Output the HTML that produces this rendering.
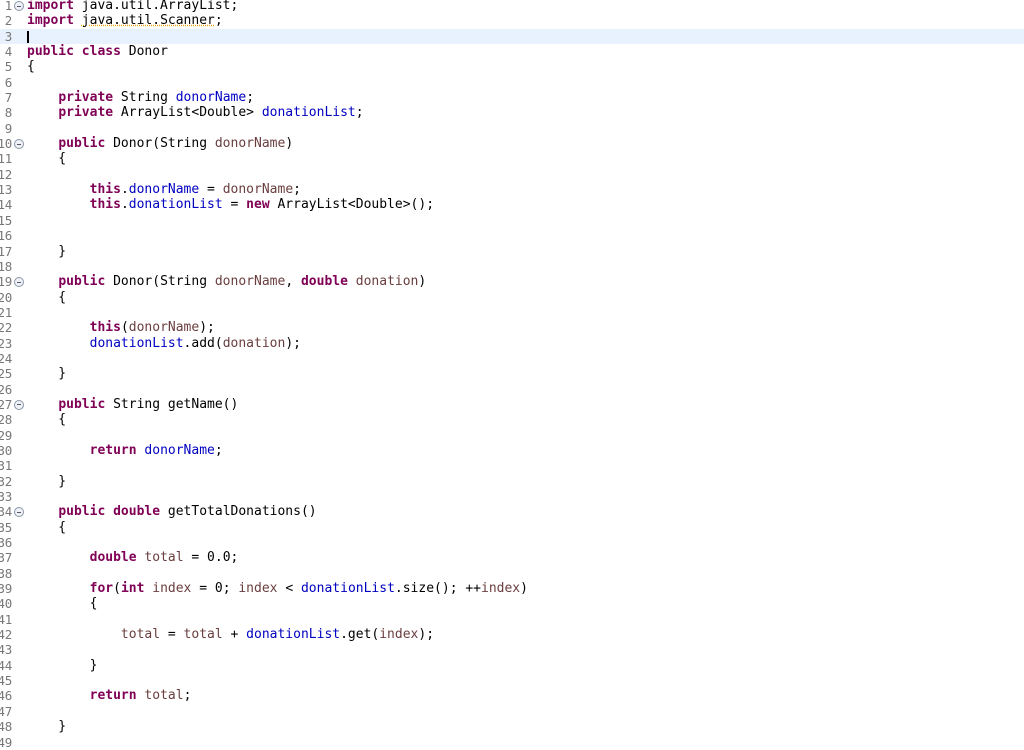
<!DOCTYPE html>
<html><head><meta charset="utf-8"><style>
html,body{margin:0;padding:0;background:#fff;width:1024px;height:748px;overflow:hidden}
#wrap{position:absolute;left:0;top:-2px;width:1024px}
.l{position:relative;height:15.35px;line-height:15.35px;font-family:"DejaVu Sans Mono","Liberation Mono",monospace;font-size:13px;white-space:pre;color:#000}
.n{position:absolute;right:1012px;top:0;color:#787878;font-size:12.5px;letter-spacing:-0.3px}
.c{position:absolute;left:27px;top:0}
.k{color:#7f0055;font-weight:bold}
.f{color:#0000c0}
.v{color:#6a3e3e}
.fold{position:absolute;left:14px;top:3px;width:8px;height:8px;border:1px solid #8a97a8;border-radius:50%;background:#eef1f6}
.fold:after{content:"";position:absolute;left:2px;top:3.5px;width:4px;height:1px;background:#556}
.hl{background:#e8f2fe}
.hl .hlb{position:absolute;left:22px;right:0;top:0;bottom:0;background:#e8f2fe}
.cur{position:absolute;left:27px;top:2px;width:2px;height:12px;background:#000}
.sq{text-decoration:underline dotted #e0a000}
</style></head><body><div id="wrap">
<div class="l"><span class="n">1</span><span class="fold"></span><span class="c"><span class="k">import</span> java.util.ArrayList;</span></div>
<div class="l"><span class="n">2</span><span class="c"><span class="k">import</span> <span class="sq">java.util.Scanner</span>;</span></div>
<div class="l hl"><span class="hlb"></span><span class="n">3</span><span class="cur"></span></div>
<div class="l"><span class="n">4</span><span class="c"><span class="k">public</span> <span class="k">class</span> Donor</span></div>
<div class="l"><span class="n">5</span><span class="c">{</span></div>
<div class="l"><span class="n">6</span></div>
<div class="l"><span class="n">7</span><span class="c">    <span class="k">private</span> String <span class="f">donorName</span>;</span></div>
<div class="l"><span class="n">8</span><span class="c">    <span class="k">private</span> ArrayList&lt;Double&gt; <span class="f">donationList</span>;</span></div>
<div class="l"><span class="n">9</span></div>
<div class="l"><span class="n">10</span><span class="fold"></span><span class="c">    <span class="k">public</span> Donor(String <span class="v">donorName</span>)</span></div>
<div class="l"><span class="n">11</span><span class="c">    {</span></div>
<div class="l"><span class="n">12</span></div>
<div class="l"><span class="n">13</span><span class="c">        <span class="k">this</span>.<span class="f">donorName</span> = <span class="v">donorName</span>;</span></div>
<div class="l"><span class="n">14</span><span class="c">        <span class="k">this</span>.<span class="f">donationList</span> = <span class="k">new</span> ArrayList&lt;Double&gt;();</span></div>
<div class="l"><span class="n">15</span></div>
<div class="l"><span class="n">16</span></div>
<div class="l"><span class="n">17</span><span class="c">    }</span></div>
<div class="l"><span class="n">18</span></div>
<div class="l"><span class="n">19</span><span class="fold"></span><span class="c">    <span class="k">public</span> Donor(String <span class="v">donorName</span>, <span class="k">double</span> <span class="v">donation</span>)</span></div>
<div class="l"><span class="n">20</span><span class="c">    {</span></div>
<div class="l"><span class="n">21</span></div>
<div class="l"><span class="n">22</span><span class="c">        <span class="k">this</span>(<span class="v">donorName</span>);</span></div>
<div class="l"><span class="n">23</span><span class="c">        <span class="f">donationList</span>.add(<span class="v">donation</span>);</span></div>
<div class="l"><span class="n">24</span></div>
<div class="l"><span class="n">25</span><span class="c">    }</span></div>
<div class="l"><span class="n">26</span></div>
<div class="l"><span class="n">27</span><span class="fold"></span><span class="c">    <span class="k">public</span> String getName()</span></div>
<div class="l"><span class="n">28</span><span class="c">    {</span></div>
<div class="l"><span class="n">29</span></div>
<div class="l"><span class="n">30</span><span class="c">        <span class="k">return</span> <span class="f">donorName</span>;</span></div>
<div class="l"><span class="n">31</span></div>
<div class="l"><span class="n">32</span><span class="c">    }</span></div>
<div class="l"><span class="n">33</span></div>
<div class="l"><span class="n">34</span><span class="fold"></span><span class="c">    <span class="k">public</span> <span class="k">double</span> getTotalDonations()</span></div>
<div class="l"><span class="n">35</span><span class="c">    {</span></div>
<div class="l"><span class="n">36</span></div>
<div class="l"><span class="n">37</span><span class="c">        <span class="k">double</span> <span class="v">total</span> = 0.0;</span></div>
<div class="l"><span class="n">38</span></div>
<div class="l"><span class="n">39</span><span class="c">        <span class="k">for</span>(<span class="k">int</span> <span class="v">index</span> = 0; <span class="v">index</span> &lt; <span class="f">donationList</span>.size(); ++<span class="v">index</span>)</span></div>
<div class="l"><span class="n">40</span><span class="c">        {</span></div>
<div class="l"><span class="n">41</span></div>
<div class="l"><span class="n">42</span><span class="c">            <span class="v">total</span> = <span class="v">total</span> + <span class="f">donationList</span>.get(<span class="v">index</span>);</span></div>
<div class="l"><span class="n">43</span></div>
<div class="l"><span class="n">44</span><span class="c">        }</span></div>
<div class="l"><span class="n">45</span></div>
<div class="l"><span class="n">46</span><span class="c">        <span class="k">return</span> <span class="v">total</span>;</span></div>
<div class="l"><span class="n">47</span></div>
<div class="l"><span class="n">48</span><span class="c">    }</span></div>
<div class="l"><span class="n">49</span></div>
</div></body></html>
